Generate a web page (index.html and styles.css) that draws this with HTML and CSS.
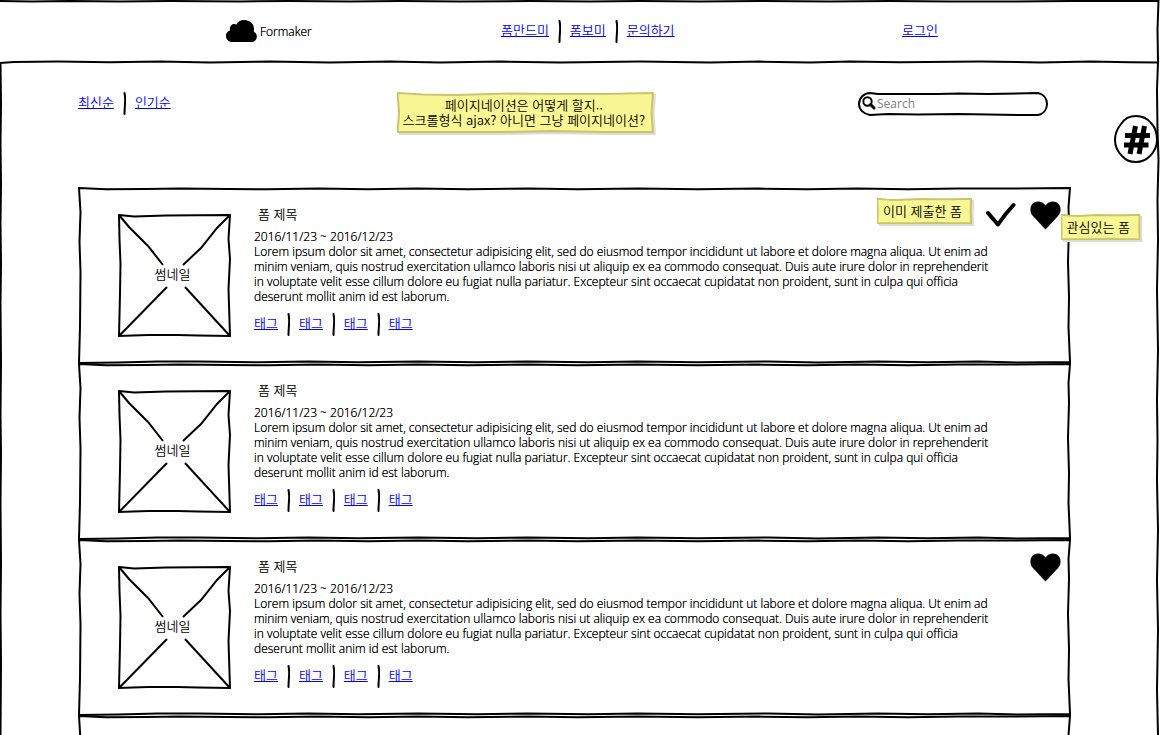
FILE: index.html
```html
<!DOCTYPE html>
<html lang="ko">
<head>
<meta charset="utf-8">
<title>Formaker</title>
<link rel="stylesheet" href="styles.css">
</head>
<body>
<svg class="sprite" aria-hidden="true">
  <symbol id="card-frame" viewBox="0 0 993 177" preserveAspectRatio="none">
    <path vector-effect="non-scaling-stroke" d="M1 1 L28 2.200 68 2 102 1.500 150 2 190 2.200 240 1.500 290 2.200 340 1.600 390 2.200 450 1.500 500 2.200 560 1.500 620 2.200 680 1.600 730 2.300 780 1.500 830 2.200 880 1.600 930 1.500 992 1 L990.500 20 991 40 990 75 991 110 990.500 140 992 175 L940 175.500 900 174.500 850 175.200 800 174.500 740 175.500 690 174.500 620 175.200 560 174.500 510 175.300 450 174.500 400 175.200 340 174.500 280 175.300 230 174.500 180 175.200 120 174.500 80 174.500 40 175.500 1 176 L2 140 2.500 85 1.500 55 2.500 25 Z"/>
  </symbol>
  <symbol id="thumb-frame" viewBox="0 0 114 124" preserveAspectRatio="none">
    <path vector-effect="non-scaling-stroke" d="M1 1 L16 2.500 32 2 48 1.500 112 1 L110.500 25 112 45 110.500 75 112 122 L80 121.500 60 121 30 121 1 122 L2 80 2.500 50 1.500 25 Z"/>
    <path vector-effect="non-scaling-stroke" d="M1 1 L11 13 30 32 45 51 M112 1 L99 14 83 34 65 51 M1 122 L49 73 M67 73 L112 122"/>
  </symbol>
  <symbol id="separator" viewBox="0 0 3 23">
    <path d="M1.500 1 Q2.500 6 2 12 T1.500 22"/>
  </symbol>
  <symbol id="note-frame" viewBox="0 0 100 40" preserveAspectRatio="none">
    <path vector-effect="non-scaling-stroke" d="M.2 1 L10 2.500 22 3 45 1.500 60 2 80 2 99 1 L98.500 20 99 39 L80 39 60 38 40 39 20 39 .2 39 L.8 20 Z"/>
  </symbol>
  <symbol id="heart" viewBox="0 0 31 29">
    <path d="M15.500 28.500 L2.500 14.500 C-1 10 0 3 5 1 C9-.5 13 1 15.500 4.500 C18 1 22-.5 26 1 C31 3 32 10 28.500 14.500 Z"/>
  </symbol>
</svg>

<header class="site-header">
  <svg class="header-line header-line-top" viewBox="0 0 1161 4" preserveAspectRatio="none" aria-hidden="true"><path vector-effect="non-scaling-stroke" d="M0 1 L32 1.500 70 1 120 1.500 170 1 240 1.500 290 1 350 1.500 400 1 460 1.500 530 1 590 1.500 640 1 700 1.500 760 1 830 1.500 890 1 950 1.500 1010 1.500 1070 1 1158 1"/></svg>
  <a class="brand" href="#"><svg class="cloud" viewBox="0 0 31 22" aria-hidden="true"><path d="M5 22 C1 21 0 18 0 15.500 C0 13 1.500 11.500 4 10.500 C3.500 7 5 4 8 4 C9 4 9.500 4.500 10.500 4.500 C11.500 1.500 14.500 0 18 0 C24 0 28.500 4 28 10 C27.500 11.500 28 12 29 12.500 C32 15 31.500 20 27 22 Z"/></svg><span>Formaker</span></a>
  <nav class="links">
    <a href="#">폼만드미</a><svg class="separator" aria-hidden="true"><use href="#separator"/></svg><a href="#">폼보미</a><svg class="separator" aria-hidden="true"><use href="#separator"/></svg><a href="#">문의하기</a>
  </nav>
  <a class="login" href="#">로그인</a>
  <svg class="header-line header-line-bottom" viewBox="0 0 1161 4" preserveAspectRatio="none" aria-hidden="true"><path vector-effect="non-scaling-stroke" d="M0 3 L14 2 58 1.600 110 2.200 160 1.600 210 2.400 270 1.600 330 2.400 390 1.600 440 2.400 500 1.600 560 2.400 640 1.600 710 2.400 760 1.600 810 2.400 850 1.600 900 2.200 980 1.600 1040 2.400 1090 1.600 1130 2.200 1158 2.500"/></svg>
</header>

<main class="board">
  <svg class="side-line side-line-left" viewBox="0 0 3 672" preserveAspectRatio="none" aria-hidden="true"><path vector-effect="non-scaling-stroke" d="M.5 0 L1 40 .5 80 1 120 .5 160 1 200 .5 240 1 300 .5 350 1 390 .5 440 1 500 .5 550 1 600 .5 672"/></svg>
  <div class="toolbar">
    <nav class="links">
      <a href="#">최신순</a><svg class="separator" aria-hidden="true"><use href="#separator"/></svg><a href="#">인기순</a>
    </nav>
    <p class="note note-wide"><svg class="frame" aria-hidden="true"><use href="#note-frame"/></svg><span>페이지네이션은 어떻게 할지..<br>스크롤형식 ajax? 아니면 그냥 페이지네이션?</span></p>
    <form class="search" role="search">
      <svg class="frame" viewBox="0 0 190 24" preserveAspectRatio="none" aria-hidden="true"><path vector-effect="non-scaling-stroke" d="M12 1 L20 2 40 2 80 2 100 1.500 130 2 180 1 C185 2 189 6 189 12 C189 18 185 22 180 23 L160 23 130 22.500 100 22 60 22.500 30 22 12 23 C6 22 1 18 1 12 C1 6 6 1 12 1 Z"/></svg>
      <label for="query" aria-label="Search"><svg class="lens" viewBox="0 0 14 14" aria-hidden="true"><circle cx="5.500" cy="5.500" r="4.200"/><path d="M8.500 8.500 L12 12"/></svg></label>
      <input id="query" type="search" placeholder="Search">
    </form>
  </div>

  <section class="cards">
    <article class="card">
      <svg class="frame" aria-hidden="true"><use href="#card-frame"/></svg>
      <figure class="thumb"><svg class="frame" aria-hidden="true"><use href="#thumb-frame"/></svg><figcaption>썸네일</figcaption></figure>
      <div class="details">
        <h2>폼 제목</h2>
        <p class="period">2016/11/23 ~ 2016/12/23</p>
        <p class="summary">Lorem ipsum dolor sit amet, consectetur adipisicing elit, sed do eiusmod tempor incididunt ut labore et dolore magna aliqua. Ut enim ad minim veniam, quis nostrud exercitation ullamco laboris nisi ut aliquip ex ea commodo consequat. Duis aute irure dolor in reprehenderit in voluptate velit esse cillum dolore eu fugiat nulla pariatur. Excepteur sint occaecat cupidatat non proident, sunt in culpa qui officia deserunt mollit anim id est laborum.</p>
        <div class="links"><a href="#">태그</a><svg class="separator" aria-hidden="true"><use href="#separator"/></svg><a href="#">태그</a><svg class="separator" aria-hidden="true"><use href="#separator"/></svg><a href="#">태그</a><svg class="separator" aria-hidden="true"><use href="#separator"/></svg><a href="#">태그</a></div>
      </div>
      <div class="status">
        <p class="note"><svg class="frame" aria-hidden="true"><use href="#note-frame"/></svg><span>이미 제출한 폼</span></p>
        <svg class="check" viewBox="0 0 30 26" aria-hidden="true"><path d="M2 11 L12 22.500 Q19 12 27.500 3"/></svg>
        <svg class="heart" aria-hidden="true"><use href="#heart"/></svg>
      </div>
      <p class="note note-hint"><svg class="frame" aria-hidden="true"><use href="#note-frame"/></svg><span>관심있는 폼</span></p>
    </article>

    <article class="card">
      <svg class="frame" aria-hidden="true"><use href="#card-frame"/></svg>
      <figure class="thumb"><svg class="frame" aria-hidden="true"><use href="#thumb-frame"/></svg><figcaption>썸네일</figcaption></figure>
      <div class="details">
        <h2>폼 제목</h2>
        <p class="period">2016/11/23 ~ 2016/12/23</p>
        <p class="summary">Lorem ipsum dolor sit amet, consectetur adipisicing elit, sed do eiusmod tempor incididunt ut labore et dolore magna aliqua. Ut enim ad minim veniam, quis nostrud exercitation ullamco laboris nisi ut aliquip ex ea commodo consequat. Duis aute irure dolor in reprehenderit in voluptate velit esse cillum dolore eu fugiat nulla pariatur. Excepteur sint occaecat cupidatat non proident, sunt in culpa qui officia deserunt mollit anim id est laborum.</p>
        <div class="links"><a href="#">태그</a><svg class="separator" aria-hidden="true"><use href="#separator"/></svg><a href="#">태그</a><svg class="separator" aria-hidden="true"><use href="#separator"/></svg><a href="#">태그</a><svg class="separator" aria-hidden="true"><use href="#separator"/></svg><a href="#">태그</a></div>
      </div>
    </article>

    <article class="card">
      <svg class="frame" aria-hidden="true"><use href="#card-frame"/></svg>
      <figure class="thumb"><svg class="frame" aria-hidden="true"><use href="#thumb-frame"/></svg><figcaption>썸네일</figcaption></figure>
      <div class="details">
        <h2>폼 제목</h2>
        <p class="period">2016/11/23 ~ 2016/12/23</p>
        <p class="summary">Lorem ipsum dolor sit amet, consectetur adipisicing elit, sed do eiusmod tempor incididunt ut labore et dolore magna aliqua. Ut enim ad minim veniam, quis nostrud exercitation ullamco laboris nisi ut aliquip ex ea commodo consequat. Duis aute irure dolor in reprehenderit in voluptate velit esse cillum dolore eu fugiat nulla pariatur. Excepteur sint occaecat cupidatat non proident, sunt in culpa qui officia deserunt mollit anim id est laborum.</p>
        <div class="links"><a href="#">태그</a><svg class="separator" aria-hidden="true"><use href="#separator"/></svg><a href="#">태그</a><svg class="separator" aria-hidden="true"><use href="#separator"/></svg><a href="#">태그</a><svg class="separator" aria-hidden="true"><use href="#separator"/></svg><a href="#">태그</a></div>
      </div>
      <div class="status">
        <svg class="heart" aria-hidden="true"><use href="#heart"/></svg>
      </div>
    </article>

    <article class="card">
      <svg class="frame" aria-hidden="true"><use href="#card-frame"/></svg>
    </article>
  </section>
</main>

<svg class="side-line side-line-right" viewBox="0 0 5 735" preserveAspectRatio="none" aria-hidden="true"><path vector-effect="non-scaling-stroke" d="M3.500 0 L2.500 30 3 62 2 90 2.500 130 3.500 160 2.500 200 3 240 2 290 3 350 2 400 2.500 440 2 480 3 530 2 580 3 630 2 690 3 735"/></svg>
<button class="tag-button" type="button" aria-label="태그">
  <svg viewBox="0 0 44 48" aria-hidden="true"><path class="ring" d="M22 1 C29 1 33 3 37 8 C42 13 43 18 43 25 C43 32 40 37 36 41 C32 45 28 47 22 47 C15 47 12 45 8 41 C3 36 1 31 1 25 C1 18 3 14 7 9 C11 3 15 1 22 1 Z"/><path class="hash" d="M21.500 11 L16 39 M30.500 11 L25 39 M11 20.500 H36 M10 30 H34.500"/></svg>
</button>
</body>
</html>
```

FILE: styles.css
```css
* {
  box-sizing: border-box;
}

body {
  position: relative;
  display: flex;
  flex-direction: column;
  height: 100vh;
  margin: 0;
  overflow: hidden;
  background: #fff;
  color: #000;
  font: 350 13px/15px "Noto Sans CJK KR", sans-serif;
}

p,
h2,
figure {
  margin: 0;
}

svg {
  display: block;
  flex: none;
}

a {
  color: #00f;
}

.sprite {
  position: absolute;
  width: 0;
  height: 0;
}

.period,
.summary,
.brand {
  font-family: "Open Sans", sans-serif;
  font-size: 12px;
  font-weight: 300;
  text-shadow: 0 0 0 #000;
}

.frame {
  position: absolute;
  inset: 0;
  width: 100%;
  height: 100%;
  fill: #fff;
  stroke: #000;
  stroke-width: 2px;
}

.links {
  display: flex;
  align-items: flex-start;
  gap: 9px;
  line-height: 19px;
}

.separator {
  width: 3px;
  height: 23px;
  fill: none;
  stroke: #000;
  stroke-width: 2px;
  stroke-linecap: round;
}

/* Header */

.site-header {
  position: relative;
  display: grid;
  grid-template-columns: 275fr 401fr 36fr;
  align-items: center;
  flex: none;
  height: 64px;
  padding: 0 223px 2px 226px;
}

.header-line {
  position: absolute;
  left: 0;
  width: 100%;
  height: 4px;
  fill: none;
  stroke: #000;
  stroke-width: 2px;
}

.header-line-top {
  top: 0;
}

.header-line-bottom {
  bottom: 0;
}

.brand {
  display: flex;
  align-items: center;
  gap: 3px;
  color: #000;
  text-decoration: none;
}

.cloud {
  width: 31px;
  height: 22px;
}

.login {
  padding-bottom: 4px;
  white-space: nowrap;
}

/* Board */

.board {
  position: relative;
  flex: 1;
  min-height: 0;
  padding: 28px 90px 0 78px;
}

.side-line {
  position: absolute;
  top: 0;
  height: 100%;
  fill: none;
  stroke: #000;
  stroke-width: 2px;
}

.side-line-left {
  left: 0;
  width: 3px;
}

.side-line-right {
  right: 1px;
  width: 5px;
}

.toolbar {
  display: flex;
  align-items: flex-start;
  height: 96px;
  padding-right: 23px;
}

.search {
  position: relative;
  display: flex;
  align-items: center;
  gap: 1px;
  width: 190px;
  height: 24px;
  padding: 0 12px 2px 4px;
}

.search label,
.search input {
  position: relative;
}

.search input {
  flex: 1;
  min-width: 0;
  padding: 0;
  border: 0;
  outline: 0;
  background: none;
  font: 400 12px/15px "Open Sans", sans-serif;
}

.search input::placeholder {
  color: #808080;
}

.lens {
  width: 14px;
  height: 14px;
  fill: none;
  stroke: #000;
  stroke-width: 2px;
  stroke-linecap: round;
}

.lens path {
  stroke-width: 3px;
}

/* Sticky notes */

.note {
  position: relative;
  padding: 5px 10px 6px 6px;
  text-align: center;
  white-space: nowrap;
}

.note > span {
  position: relative;
}

.note .frame {
  overflow: visible;
  fill: #f9f793;
  stroke: #c9c56c;
  filter: drop-shadow(2px 2px 0 #e2d9d9);
}

.note-wide {
  margin: 0 203px 0 auto;
}

/* Cards */

.card {
  position: relative;
  display: flex;
  gap: 22px;
  height: 176px;
  padding: 0 9px 0 40px;
}

.card > .frame {
  top: -1px;
  height: 177px;
}

.thumb {
  position: relative;
  display: grid;
  place-items: center;
  flex: none;
  width: 114px;
  height: 124px;
  margin-top: 26px;
}

.thumb figcaption {
  position: relative;
  padding: 0 5px 6px 0;
}

.details {
  position: relative;
  padding-top: 17px;
}

.details h2 {
  margin: 0 0 7px 4px;
  font-size: 13px;
  font-weight: 350;
  line-height: 18px;
}

.period {
  line-height: 14px;
}

.summary {
  max-width: 746px;
  margin-bottom: 9px;
}

.status {
  position: absolute;
  top: 10px;
  right: 10px;
  display: flex;
  align-items: flex-start;
  gap: 14px;
}

.check {
  width: 30px;
  height: 26px;
  margin-top: 4px;
  fill: none;
  stroke: #000;
  stroke-width: 4px;
  stroke-linecap: round;
  stroke-linejoin: round;
}

.heart {
  width: 31px;
  height: 29px;
  margin-top: 3px;
}

.note-hint {
  position: absolute;
  top: 26px;
  right: -69px;
}

/* Floating tag button */

.tag-button {
  position: absolute;
  top: 115px;
  right: 3px;
  width: 44px;
  height: 48px;
  padding: 0;
  border: 0;
  background: none;
}

.tag-button svg {
  width: 100%;
  height: 100%;
}

.ring {
  fill: #fff;
  stroke: #000;
  stroke-width: 2px;
}

.hash {
  fill: none;
  stroke: #000;
  stroke-width: 5px;
}
```
